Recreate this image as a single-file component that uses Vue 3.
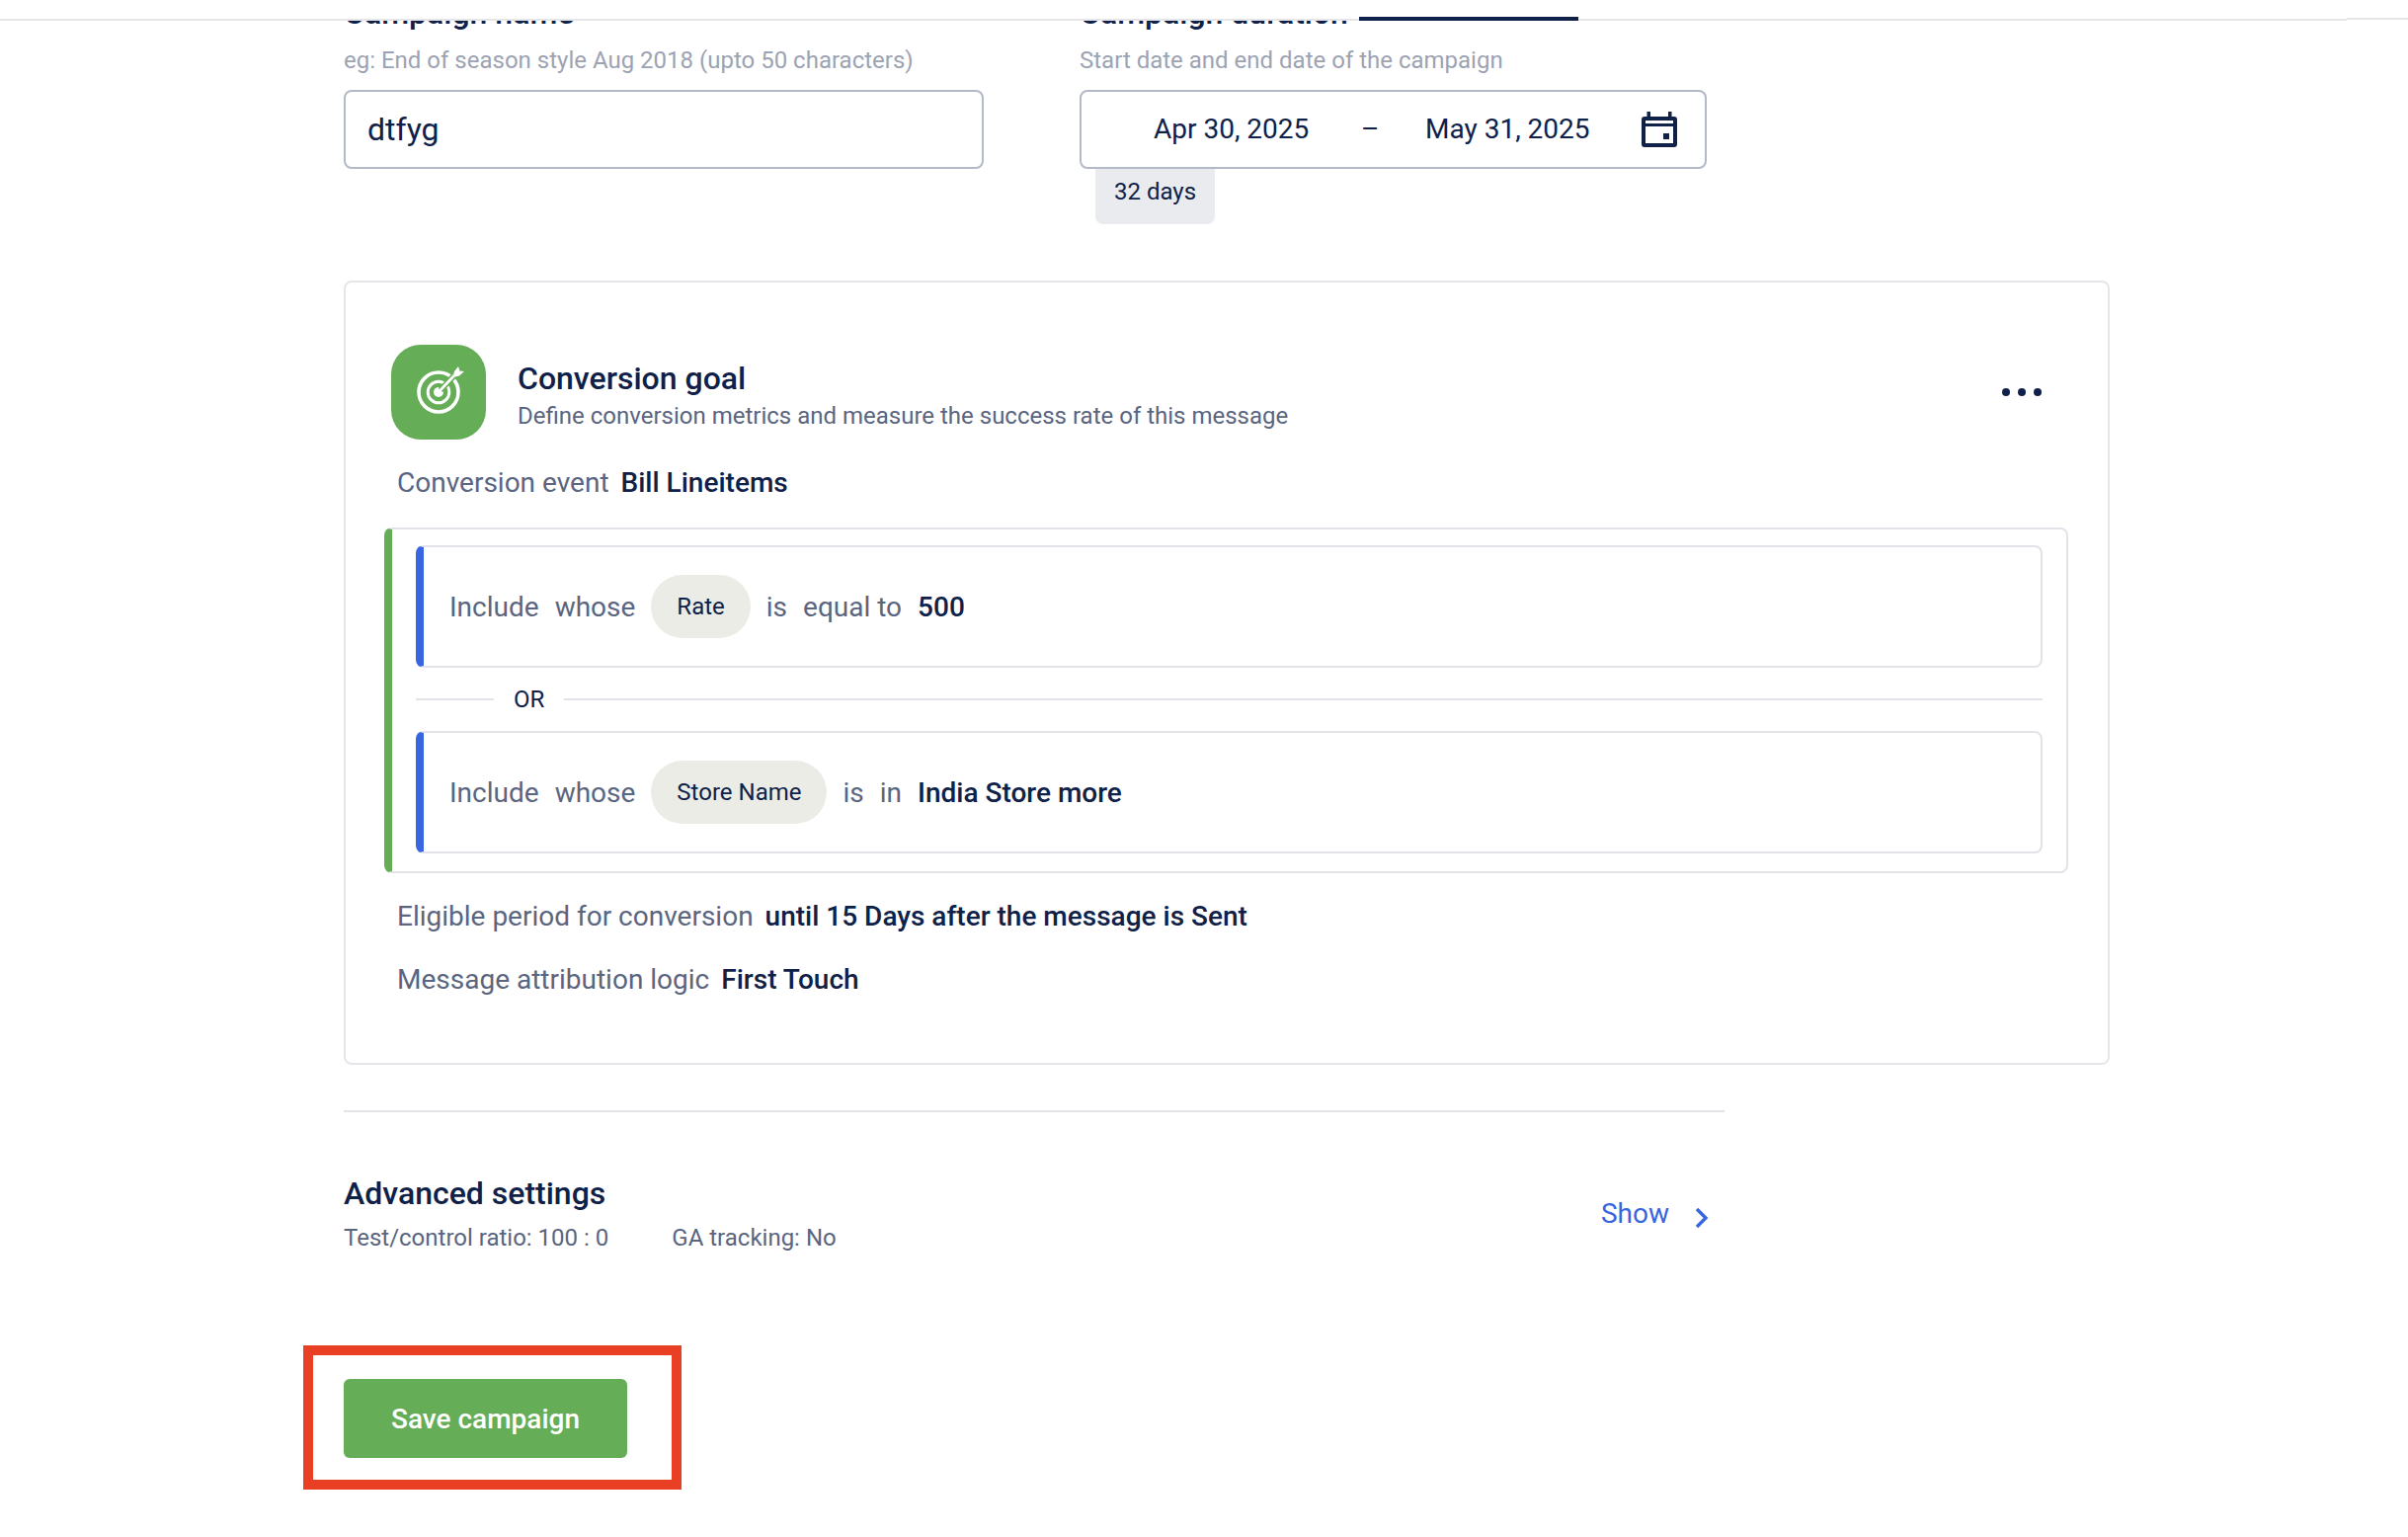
<template>
  <div class="page">
    <header class="topbar">
      <div class="topbar-main"></div>
      <div class="topbar-end"></div>
      <span class="tab-indicator"></span>
    </header>

    <main class="scroller">
      <div class="content">
        <section class="fields">
          <div class="field name-field">
            <h2 class="field-label">Campaign name</h2>
            <p class="field-hint">eg: End of season style Aug 2018 (upto 50 characters)</p>
            <input class="text-input" type="text" v-model="campaignName" />
          </div>
          <div class="field date-field">
            <h2 class="field-label">Campaign duration</h2>
            <p class="field-hint">Start date and end date of the campaign</p>
            <div class="date-range">
              <span class="date-start">{{ startDate }}</span>
              <span class="date-dash">–</span>
              <span class="date-end">{{ endDate }}</span>
              <svg class="calendar-icon" viewBox="0 0 36 36" fill="none">
                <path d="M5.5 0h3.5v5h18V0h3.5v5H33a3 3 0 0 1 3 3v25a3 3 0 0 1-3 3H3a3 3 0 0 1-3-3V8a3 3 0 0 1 3-3h2.5V0zM4 15v17h28V15H4zm0-6v3h28V9H4z" fill="#0f2148" fill-rule="evenodd" />
                <rect x="22" y="22" width="6" height="6" fill="#0f2148" />
              </svg>
            </div>
            <span class="days-badge">32 days</span>
          </div>
        </section>

        <section class="goal-card">
          <div class="goal-head">
            <div class="goal-icon">
              <svg viewBox="0 0 60 60" width="60" height="60" fill="none" stroke="#fff">
                <circle cx="30" cy="30" r="20" stroke-width="3.6" />
                <circle cx="30" cy="30" r="10.8" stroke-width="3" />
                <circle cx="30" cy="30" r="5" fill="#fff" stroke="none" />
                <path d="M32 28L46 13" stroke="#65ad56" stroke-width="6" />
                <path d="M30 30L46 13" stroke-width="2.6" />
                <path d="M44.5 15L46 9l4-5 1.5 4.5L56 9l-5 4.5z" fill="#fff" stroke="none" />
              </svg>
            </div>
            <div class="goal-titles">
              <h3 class="goal-title">Conversion goal</h3>
              <p class="goal-sub">Define conversion metrics and measure the success rate of this message</p>
            </div>
            <button class="more-btn" aria-label="More">
              <i></i><i></i><i></i>
            </button>
          </div>

          <p class="meta-row event-row">
            <span class="meta-label">Conversion event</span>
            <span class="meta-value">Bill Lineitems</span>
          </p>

          <div class="conditions">
            <template v-for="(cond, i) in conditions" :key="cond.field">
              <div v-if="i > 0" class="or-row">
                <span class="or-text">OR</span>
              </div>
              <div class="condition">
                <span>Include</span>
                <span>whose</span>
                <span class="pill">{{ cond.field }}</span>
                <span v-for="word in cond.op" :key="word">{{ word }}</span>
                <span class="meta-value">{{ cond.value }}</span>
              </div>
            </template>
          </div>

          <p class="meta-row eligible-row">
            <span class="meta-label">Eligible period for conversion</span>
            <span class="meta-value">until 15 Days after the message is Sent</span>
          </p>
          <p class="meta-row attribution-row">
            <span class="meta-label">Message attribution logic</span>
            <span class="meta-value">First Touch</span>
          </p>
        </section>

        <section class="advanced">
          <div>
            <h3 class="advanced-title">Advanced settings</h3>
            <div class="advanced-meta">
              <span>Test/control ratio: 100 : 0</span>
              <span>GA tracking: No</span>
            </div>
          </div>
          <a class="show-link" href="#" @click.prevent>
            Show
            <svg viewBox="0 0 14 22" width="14" height="22" fill="none" stroke="#3866e0" stroke-width="3.4">
              <path d="M2 2l9 9-9 9" />
            </svg>
          </a>
        </section>

        <div class="save-wrap">
          <button class="save-btn">Save campaign</button>
          <span class="highlight"></span>
        </div>
      </div>
    </main>
  </div>
</template>

<script setup>
import { ref } from 'vue'

const campaignName = ref('dtfyg')
const startDate = 'Apr 30, 2025'
const endDate = 'May 31, 2025'

const conditions = [
  { field: 'Rate', op: ['is', 'equal to'], value: '500' },
  { field: 'Store Name', op: ['is', 'in'], value: 'India Store more' },
]
</script>

<style scoped>
.page {
  height: 1556px;
  overflow: hidden;
  display: flex;
  flex-direction: column;
  background: #fff;
  color: #0f2148;
  font-family: Roboto, "Liberation Sans", sans-serif;
}

/* top strip */
.topbar {
  position: relative;
  flex: none;
  height: 21px;
  display: flex;
  background: #fff;
}
.topbar-main {
  flex: 1;
  margin-top: 19px;
  height: 2px;
  background: #e6e6e8;
}
.topbar-end {
  width: 62px;
  margin-top: 18px;
  height: 2px;
  background: #e6e6e8;
}
.tab-indicator {
  position: absolute;
  left: 1376px;
  top: 17px;
  width: 222px;
  height: 4px;
  background: #0f2148;
}

.scroller {
  flex: 1;
  overflow: hidden;
}
.content {
  margin-top: -21px;
  padding-left: 348px;
  width: 1788px;
}

/* name + duration */
.fields {
  display: flex;
  height: 284px;
  box-sizing: border-box;
}
.name-field {
  width: 648px;
  margin-right: 97px;
}
.date-field {
  width: 635px;
}
.field-label {
  margin: -7px 0 0;
  height: 40px;
  font-size: 32px;
  line-height: 40px;
  font-weight: 500;
}
.field-hint {
  margin: 0 0 13px;
  padding-top: 12px;
  height: 33px;
  font-size: 24px;
  line-height: 33px;
  color: #9ca3b3;
}
.text-input {
  display: block;
  width: 100%;
  height: 80px;
  box-sizing: border-box;
  padding: 0 22px;
  border: 2px solid #b3b9c7;
  border-radius: 8px;
  outline: none;
  background: #fff;
  color: #0f2148;
  font: 400 32px Roboto, sans-serif;
}
.date-range {
  display: flex;
  align-items: center;
  height: 80px;
  box-sizing: border-box;
  padding-left: 73px;
  border: 2px solid #b3b9c7;
  border-radius: 8px;
  font-size: 28px;
}
.date-start,
.date-dash,
.date-end {
  margin-top: -2px;
}
.date-start {
  width: 210px;
}
.date-dash {
  width: 65px;
}
.date-end {
  width: 219px;
}
.calendar-icon {
  width: 36px;
  height: 36px;
}
.days-badge {
  display: inline-block;
  margin-left: 16px;
  padding: 0 19px;
  height: 56px;
  line-height: 46px;
  font-size: 24px;
  background: #e9ebef;
  border-radius: 0 0 8px 8px;
}

/* conversion goal */
.goal-card {
  position: relative;
  height: 794px;
  box-sizing: border-box;
  padding: 63px 0 0 46px;
  border: 2px solid #e6e6ea;
  border-radius: 8px;
}
.goal-head {
  display: flex;
  align-items: center;
  height: 96px;
}
.goal-icon {
  width: 96px;
  height: 96px;
  border-radius: 30px;
  background: #65ad56;
  display: flex;
  align-items: center;
  justify-content: center;
  margin-right: 32px;
}
.goal-titles {
  padding-top: 6px;
}
.goal-title {
  margin: 0;
  font-size: 32px;
  line-height: 40px;
  font-weight: 500;
}
.goal-sub {
  margin: 2px 0 0;
  font-size: 24px;
  line-height: 32px;
  color: #5a6580;
}
.more-btn {
  margin-left: auto;
  margin-right: 67px;
  display: flex;
  gap: 8px;
  padding: 0;
  border: 0;
  background: none;
}
.more-btn i {
  width: 8px;
  height: 8px;
  border-radius: 50%;
  background: #0f2148;
}
.meta-row {
  margin: 0;
  padding-left: 6px;
  display: flex;
  gap: 12px;
  font-size: 28px;
  line-height: 36px;
}
.event-row {
  margin-top: 26px;
}
.meta-label {
  color: #5a6580;
}
.meta-value {
  font-weight: 500;
  color: #0f2148;
}
.conditions {
  margin: 27px 40px 0 -7px;
  padding: 16px 24px 18px 24px;
  border: 2px solid #e2e2e8;
  border-left: 8px solid #65ad56;
  border-radius: 8px;
}
.condition {
  height: 124px;
  box-sizing: border-box;
  display: flex;
  align-items: center;
  gap: 16px;
  padding-left: 26px;
  border: 2px solid #e2e2e8;
  border-left: 8px solid #3866e0;
  border-radius: 8px;
  font-size: 28px;
  color: #5a6580;
}
.pill {
  height: 64px;
  padding: 0 26px;
  display: flex;
  align-items: center;
  border-radius: 32px;
  background: #ebece6;
  color: #0f2148;
  font-size: 24px;
}
.or-row {
  height: 64px;
  display: flex;
  align-items: center;
  padding-left: 79px;
  background: linear-gradient(#e2e2e8, #e2e2e8) center / 100% 2px no-repeat;
}
.or-text {
  padding: 0 20px;
  background: #fff;
  font-size: 24px;
}
.eligible-row {
  margin-top: 26px;
}
.attribution-row {
  margin-top: 28px;
}

/* advanced */
.advanced {
  width: 1398px;
  margin-top: 46px;
  padding-top: 62px;
  border-top: 2px solid #e2e2e8;
  display: flex;
  justify-content: space-between;
  align-items: center;
}
.advanced-title {
  margin: 0;
  font-size: 32px;
  line-height: 40px;
  font-weight: 500;
}
.advanced-meta {
  margin-top: 9px;
  display: flex;
  gap: 64px;
  font-size: 24px;
  line-height: 32px;
  color: #5a6580;
}
.show-link {
  display: flex;
  align-items: center;
  gap: 26px;
  margin-right: 16px;
  color: #3866e0;
  font-size: 28px;
  text-decoration: none;
}
.show-link svg {
  margin-top: 8px;
}

/* save button, with the red annotation round it */
.save-wrap {
  position: relative;
  display: inline-block;
  margin-top: 127px;
}
.save-btn {
  display: block;
  width: 287px;
  height: 80px;
  border: 0;
  border-radius: 6px;
  background: #65ad56;
  color: #fff;
  font: 500 28px Roboto, sans-serif;
}
.highlight {
  position: absolute;
  left: -41px;
  right: -55px;
  top: -34px;
  bottom: -32px;
  border: 10px solid #e94025;
  pointer-events: none;
}
</style>

<style>
html, body {
  margin: 0;
  background: #fff;
}
</style>
